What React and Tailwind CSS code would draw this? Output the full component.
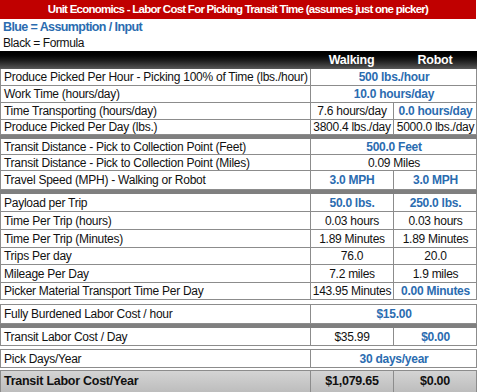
import React from "react"

const blue = "text-[#2b6cb0] font-bold"

// label, walking, robot (merged = one value over both columns), blue flags, height
const rows = [
  { type: "row", label: "Produce Picked Per Hour - Picking 100% of Time (lbs./hour)", merged: "500 lbs./hour", mb: true, h: "h-[17px]" },
  { type: "row", label: "Work Time (hours/day)", merged: "10.0 hours/day", mb: true, h: "h-[17px]" },
  { type: "row", label: "Time Transporting (hours/day)", walk: "7.6 hours/day", robot: "0.0 hours/day", rb: true, h: "h-[17px]" },
  { type: "row", label: "Produce Picked Per Day (lbs.)", walk: "3800.4 lbs./day", robot: "5000.0 lbs./day", h: "h-[15px]" },
  { type: "sep", h: "h-[4px]" },
  { type: "row", label: "Transit Distance - Pick to Collection Point (Feet)", merged: "500.0 Feet", mb: true, h: "h-[16px]" },
  { type: "row", label: "Transit Distance - Pick to Collection Point (Miles)", merged: "0.09 Miles", h: "h-[16px]" },
  { type: "row", label: "Travel Speed (MPH) - Walking or Robot", walk: "3.0 MPH", robot: "3.0 MPH", wb: true, rb: true, h: "h-[19px]" },
  { type: "sep", h: "h-[4px]" },
  { type: "row", label: "Payload per Trip", walk: "50.0 lbs.", robot: "250.0 lbs.", wb: true, rb: true, h: "h-[18px]" },
  { type: "row", label: "Time Per Trip (hours)", walk: "0.03 hours", robot: "0.03 hours", h: "h-[18px]" },
  { type: "row", label: "Time Per Trip (Minutes)", walk: "1.89 Minutes", robot: "1.89 Minutes", h: "h-[18px]" },
  { type: "row", label: "Trips Per day", walk: "76.0", robot: "20.0", h: "h-[17px]" },
  { type: "row", label: "Mileage Per Day", walk: "7.2 miles", robot: "1.9 miles", h: "h-[18px]" },
  { type: "row", label: "Picker Material Transport Time Per Day", walk: "143.95 Minutes", robot: "0.00 Minutes", rb: true, h: "h-[17px]" },
  { type: "gap", h: "h-[4px]" },
  { type: "row", label: "Fully Burdened Labor Cost / hour", merged: "$15.00", mb: true, h: "h-[20px]", top: true },
  { type: "sep", h: "h-[4px]" },
  { type: "row", label: "Transit Labor Cost / Day", walk: "$35.99", robot: "$0.00", rb: true, h: "h-[18px]" },
  { type: "gap", h: "h-[3px]" },
  { type: "row", label: "Pick Days/Year", merged: "30 days/year", mb: true, h: "h-[19px]", top: true },
  { type: "gap", h: "h-[2px]" },
]

function Cell({ children, bold, className = "" }) {
  return (
    <div className={`flex items-center justify-center border-l border-[#8c8c8c] ${bold ? blue : "text-[#111]"} ${className}`}>
      {children}
    </div>
  )
}

export default function App() {
  return (
    <div className="w-[478px] h-[392px] bg-white overflow-hidden text-[12px] leading-none tracking-[-0.26px]" style={{ fontFamily: '"Liberation Sans", Arial, sans-serif' }}>
      {/* Title */}
      <div className="w-[476px] h-[19px] bg-[#c00000] text-white font-bold text-[11.5px] tracking-[-0.75px] flex items-center justify-center">
        Unit Economics - Labor Cost For Picking Transit Time (assumes just one picker)
      </div>
      <div className="h-[16px] pl-[3px] flex items-center text-[#2b6cb0] font-bold text-[12.5px] tracking-[-0.6px]">
        Blue = Assumption / Input
      </div>
      <div className="h-[16px] pl-[3px] flex items-center text-[#111] tracking-[-0.4px]">Black = Formula</div>

      {/* Header */}
      <div className="w-[477px] h-[18px] grid grid-cols-[310px_83px_84px] bg-gradient-to-b from-[#000] via-[#1a1a1a] to-[#5a5a5a] text-white font-bold text-[12.5px]">
        <div />
        <div className="flex items-center justify-center">Walking</div>
        <div className="flex items-center justify-center">Robot</div>
      </div>

      <div className="w-[477px] flex flex-col">
        {rows.map((r, i) => {
          if (r.type === "sep") return <div key={i} className={`${r.h} bg-[#7f7f7f]`} />
          if (r.type === "gap") return <div key={i} className={`${r.h} bg-white`} />
          return (
            <div key={i} className={`${r.h} grid grid-cols-[310px_83px_84px] border-b border-r border-[#8c8c8c] ${r.top ? "border-t" : ""}`}>
              <div className="flex items-center pl-[3px] border-l border-[#8c8c8c] text-[#111] whitespace-nowrap">{r.label}</div>
              {r.merged ? (
                <Cell bold={r.mb} className="col-span-2">{r.merged}</Cell>
              ) : (
                <>
                  <Cell bold={r.wb}>{r.walk}</Cell>
                  <Cell bold={r.rb}>{r.robot}</Cell>
                </>
              )}
            </div>
          )
        })}
        {/* Total */}
        <div className="h-[22px] grid grid-cols-[310px_83px_84px] bg-gradient-to-b from-[#d4d4d4] to-[#bdbdbd] border-t border-[#8c8c8c] font-bold text-[#111] text-[12.5px]">
          <div className="flex items-center pl-[3px] border-l border-[#8c8c8c]">Transit Labor Cost/Year</div>
          <div className="flex items-center justify-center border-l border-[#8c8c8c]">$1,079.65</div>
          <div className="flex items-center justify-center border-l border-r border-[#8c8c8c]">$0.00</div>
        </div>
      </div>
    </div>
  )
}
